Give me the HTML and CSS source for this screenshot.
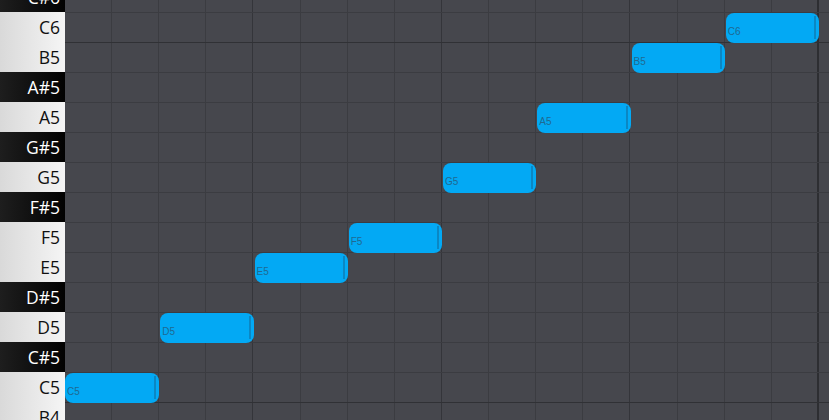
FILE: index.html
```html
<!DOCTYPE html>
<html>
<head>
<meta charset="utf-8">
<link rel="stylesheet" href="styles.css">
</head>
<body>
<div class="editor">
  <div class="keys">
    <div class="key black">C#6</div>
    <div class="key white">C6</div>
    <div class="key white">B5</div>
    <div class="key black">A#5</div>
    <div class="key white">A5</div>
    <div class="key black">G#5</div>
    <div class="key white">G5</div>
    <div class="key black">F#5</div>
    <div class="key white">F5</div>
    <div class="key white">E5</div>
    <div class="key black">D#5</div>
    <div class="key white">D5</div>
    <div class="key black">C#5</div>
    <div class="key white">C5</div>
    <div class="key white">B4</div>
  </div>
  <div class="roll">
    <div class="lane"></div>
    <div class="lane"></div>
    <div class="lane oct"></div>
    <div class="lane"></div>
    <div class="lane"></div>
    <div class="lane"></div>
    <div class="lane"></div>
    <div class="lane"></div>
    <div class="lane"></div>
    <div class="lane"></div>
    <div class="lane"></div>
    <div class="lane"></div>
    <div class="lane"></div>
    <div class="lane"></div>
    <div class="lane oct"></div>

    <div class="note first" style="grid-row: 14; grid-column: 1 / 3;">C5</div>
    <div class="note" style="grid-row: 12; grid-column: 3 / 5;">D5</div>
    <div class="note" style="grid-row: 10; grid-column: 5 / 7;">E5</div>
    <div class="note" style="grid-row: 9; grid-column: 7 / 9;">F5</div>
    <div class="note" style="grid-row: 7; grid-column: 9 / 11;">G5</div>
    <div class="note" style="grid-row: 5; grid-column: 11 / 13;">A5</div>
    <div class="note" style="grid-row: 3; grid-column: 13 / 15;">B5</div>
    <div class="note" style="grid-row: 2; grid-column: 15 / 17;">C6</div>
  </div>
</div>
</body>
</html>
```
FILE: styles.css
```css
html, body {
  margin: 0;
  padding: 0;
  width: 829px;
  height: 420px;
  overflow: hidden;
  background: #46474d;
}

.editor {
  display: flex;
  margin-top: -18px;
  height: 450px;
}

.keys {
  width: 65px;
  flex: 0 0 65px;
  display: flex;
  flex-direction: column;
}

.key {
  height: 30px;
  box-sizing: border-box;
  display: flex;
  align-items: center;
  justify-content: flex-end;
  padding-right: 5px;
  font-family: "Open Sans", "DejaVu Sans", sans-serif;
  font-size: 17.5px;
}

.key.white {
  background: linear-gradient(to right, #d9d9d9, #f5f5f5);
  color: #101010;
}

.key.black {
  background: linear-gradient(to right, #1e1e1e, #020202);
  color: #ffffff;
}

.roll {
  flex: 1;
  display: grid;
  grid-template-columns: repeat(16, 47.125px) 1fr;
  grid-template-rows: repeat(15, 30px);
  background-color: #46474d;
  background-image:
    linear-gradient(to right, transparent 0 752.5px, #2d2e32 752.5px 754.5px, transparent 754.5px),
    repeating-linear-gradient(to right, transparent 0 187.5px, #34353a 187.5px 188.5px),
    repeating-linear-gradient(to right, transparent 0 46.125px, #3b3c41 46.125px 47.125px);
}

.lane {
  grid-column: 1 / -1;
  border-top: 1px solid #3b3c41;
}

.lane.oct {
  border-top-color: #303135;
}

.lane:nth-child(1) { grid-row: 1; }
.lane:nth-child(2) { grid-row: 2; }
.lane:nth-child(3) { grid-row: 3; }
.lane:nth-child(4) { grid-row: 4; }
.lane:nth-child(5) { grid-row: 5; }
.lane:nth-child(6) { grid-row: 6; }
.lane:nth-child(7) { grid-row: 7; }
.lane:nth-child(8) { grid-row: 8; }
.lane:nth-child(9) { grid-row: 9; }
.lane:nth-child(10) { grid-row: 10; }
.lane:nth-child(11) { grid-row: 11; }
.lane:nth-child(12) { grid-row: 12; }
.lane:nth-child(13) { grid-row: 13; }
.lane:nth-child(14) { grid-row: 14; }
.lane:nth-child(15) { grid-row: 15; }

.note {
  position: relative;
  margin: 1px 0 -1px 1px;
  background: #03a9f4;
  border-radius: 8px;
  display: flex;
  align-items: flex-end;
  padding: 0 0 6px 2px;
  box-sizing: border-box;
  font-family: "Liberation Sans", Arial, sans-serif;
  font-size: 10px;
  line-height: 11px;
  color: #1f6a92;
  z-index: 1;
}

.note.first {
  margin-left: 0;
}

.note::after {
  content: "";
  position: absolute;
  right: 3px;
  top: 3px;
  bottom: 4px;
  width: 2px;
  background: #0b87c4;
}
```
